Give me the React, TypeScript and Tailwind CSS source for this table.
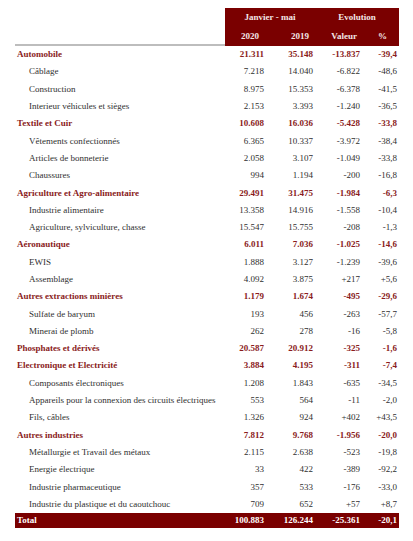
type Row = {
    label: string;
    v2020: string;
    v2019: string;
    valeur: string;
    pct: string;
    main?: boolean;
};

const rows: Row[] = [
    { label: "Automobile", v2020: "21.311", v2019: "35.148", valeur: "-13.837", pct: "-39,4", main: true },
    { label: "Câblage", v2020: "7.218", v2019: "14.040", valeur: "-6.822", pct: "-48,6" },
    { label: "Construction", v2020: "8.975", v2019: "15.353", valeur: "-6.378", pct: "-41,5" },
    { label: "Interieur véhicules et sièges", v2020: "2.153", v2019: "3.393", valeur: "-1.240", pct: "-36,5" },
    { label: "Textile et Cuir", v2020: "10.608", v2019: "16.036", valeur: "-5.428", pct: "-33,8", main: true },
    { label: "Vêtements confectionnés", v2020: "6.365", v2019: "10.337", valeur: "-3.972", pct: "-38,4" },
    { label: "Articles de bonneterie", v2020: "2.058", v2019: "3.107", valeur: "-1.049", pct: "-33,8" },
    { label: "Chaussures", v2020: "994", v2019: "1.194", valeur: "-200", pct: "-16,8" },
    { label: "Agriculture et Agro-alimentaire", v2020: "29.491", v2019: "31.475", valeur: "-1.984", pct: "-6,3", main: true },
    { label: "Industrie alimentaire", v2020: "13.358", v2019: "14.916", valeur: "-1.558", pct: "-10,4" },
    { label: "Agriculture, sylviculture, chasse", v2020: "15.547", v2019: "15.755", valeur: "-208", pct: "-1,3" },
    { label: "Aéronautique", v2020: "6.011", v2019: "7.036", valeur: "-1.025", pct: "-14,6", main: true },
    { label: "EWIS", v2020: "1.888", v2019: "3.127", valeur: "-1.239", pct: "-39,6" },
    { label: "Assemblage", v2020: "4.092", v2019: "3.875", valeur: "+217", pct: "+5,6" },
    { label: "Autres extractions minières", v2020: "1.179", v2019: "1.674", valeur: "-495", pct: "-29,6", main: true },
    { label: "Sulfate de baryum", v2020: "193", v2019: "456", valeur: "-263", pct: "-57,7" },
    { label: "Minerai de plomb", v2020: "262", v2019: "278", valeur: "-16", pct: "-5,8" },
    { label: "Phosphates et dérivés", v2020: "20.587", v2019: "20.912", valeur: "-325", pct: "-1,6", main: true },
    { label: "Electronique et Electricité", v2020: "3.884", v2019: "4.195", valeur: "-311", pct: "-7,4", main: true },
    { label: "Composants électroniques", v2020: "1.208", v2019: "1.843", valeur: "-635", pct: "-34,5" },
    { label: "Appareils pour la connexion des circuits électriques", v2020: "553", v2019: "564", valeur: "-11", pct: "-2,0" },
    { label: "Fils, câbles", v2020: "1.326", v2019: "924", valeur: "+402", pct: "+43,5" },
    { label: "Autres industries", v2020: "7.812", v2019: "9.768", valeur: "-1.956", pct: "-20,0", main: true },
    { label: "Métallurgie et Travail des métaux", v2020: "2.115", v2019: "2.638", valeur: "-523", pct: "-19,8" },
    { label: "Energie électrique", v2020: "33", v2019: "422", valeur: "-389", pct: "-92,2" },
    { label: "Industrie pharmaceutique", v2020: "357", v2019: "533", valeur: "-176", pct: "-33,0" },
    { label: "Industrie du plastique et du caoutchouc", v2020: "709", v2019: "652", valeur: "+57", pct: "+8,7" },
];

function DataRow({ row }: { row: Row }) {
    const tone = row.main ? "font-bold text-[#8a1c1c]" : "text-[#2f2f2f]";
    return (
        <div className={`flex items-center h-[17.3px] ${tone}`}>
            <div className={`w-[210px] ${row.main ? "pl-[2px]" : "pl-[14px]"}`}>{row.label}</div>
            <div className="w-[41px] text-right pr-[2px]">{row.v2020}</div>
            <div className="w-[49px] text-right pr-[2px]">{row.v2019}</div>
            <div className="w-[47px] text-right pr-[2px]">{row.valeur}</div>
            <div className="w-[37px] text-right pr-[2px]">{row.pct}</div>
        </div>
    );
}

export default function App() {
    return (
        <div className="w-[413px] h-[541px] bg-white pt-[8px] pl-[15px] text-[9px] leading-none" style={{ fontFamily: '"Liberation Serif", serif' }}>
            <div className="flex w-[384px]">
                <div className="w-[210px] flex flex-col justify-end">
                    <div className="h-[2px] bg-[#bdbdbd]" />
                </div>
                <div className="w-[174px] bg-[#7a0000] text-[#f3e6e6] font-bold">
                    <div className="flex h-[19px] items-center">
                        <div className="w-[90px] text-center">Janvier - mai</div>
                        <div className="w-[84px] text-center">Evolution</div>
                    </div>
                    <div className="flex h-[19px] items-center">
                        <div className="w-[41px] text-right pr-[7px]">2020</div>
                        <div className="w-[49px] text-right pr-[6px]">2019</div>
                        <div className="w-[47px] text-right pr-[5px]">Valeur</div>
                        <div className="w-[37px] text-right pr-[12px]">%</div>
                    </div>
                </div>
            </div>
            <div className="w-[384px]">
                {rows.map(row => (
                    <DataRow key={row.label} row={row} />
                ))}
                <div className="flex items-center h-[15px] bg-[#7a0000] text-white font-bold">
                    <div className="w-[210px] pl-[2px]">Total</div>
                    <div className="w-[41px] text-right pr-[2px]">100.883</div>
                    <div className="w-[49px] text-right pr-[2px]">126.244</div>
                    <div className="w-[47px] text-right pr-[2px]">-25.361</div>
                    <div className="w-[37px] text-right pr-[2px]">-20,1</div>
                </div>
            </div>
        </div>
    );
}
